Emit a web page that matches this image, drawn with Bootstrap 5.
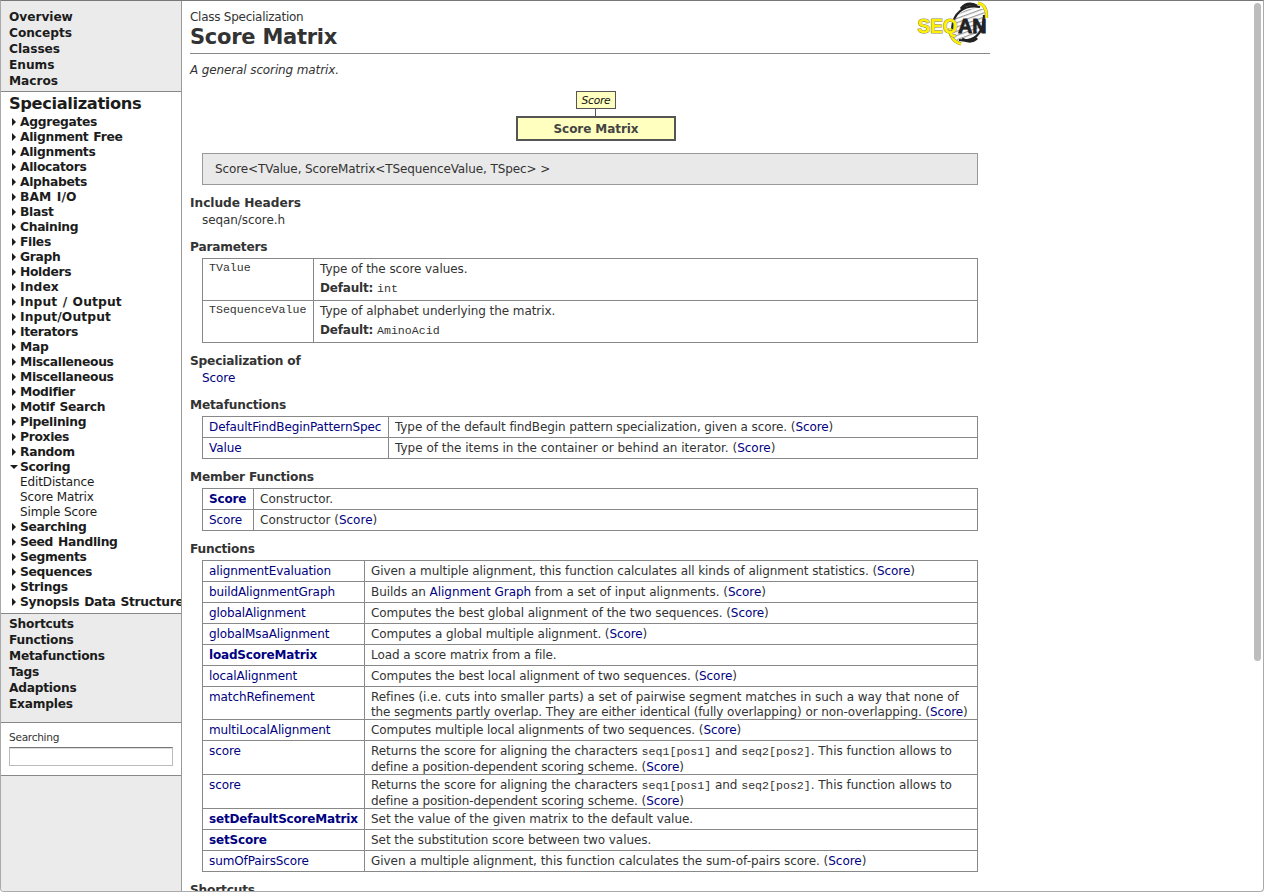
<!DOCTYPE html>
<html lang="en">
<head>
<meta charset="utf-8">
<title>Score Matrix</title>
<link rel="stylesheet" href="https://cdn.jsdelivr.net/npm/bootstrap@5.3.0/dist/css/bootstrap.min.css">
<style>
html,body{height:100%}
body{font-family:"DejaVu Sans",Verdana,sans-serif;font-size:12px;line-height:15px;color:#333;background:#fff;letter-spacing:-.07px}
a{color:#000080;text-decoration:none}
.window{border:1px solid #aaa;border-top-color:#777;border-radius:0 0 4px 4px}
.sidebar{width:181px;border-right:1px solid #999;background:#ebebeb}
.sidebar a{color:#1c1c1c;display:block;font-weight:bold;white-space:nowrap}
.side-links{line-height:16px;font-size:12.2px;padding-left:8px;letter-spacing:-.22px}
.side-top{height:90px;padding-top:8px;letter-spacing:-.05px}
.side-bottom{padding-top:2px;height:108px}
.tree{height:523px;border:solid #888;border-width:1px 0;padding:3px 0 0 8px}
.tree a{padding-left:11px;position:relative;font-size:12.3px;letter-spacing:-.32px;word-spacing:1px}
.tree a.tree-title{font-size:16.3px;line-height:18px;padding-left:0;margin-bottom:2px;letter-spacing:-.38px}
.tree a.leaf{font-weight:normal;font-size:12px;letter-spacing:-.12px;word-spacing:0}
.tree a.wide{letter-spacing:.1px}
.tree a.closed::before{content:"";position:absolute;left:3px;top:3px;border-left:4px solid #1c1c1c;border-top:4px solid transparent;border-bottom:4px solid transparent}
.tree a.opened::before{content:"";position:absolute;left:1px;top:5px;border-top:4px solid #1c1c1c;border-left:4px solid transparent;border-right:4px solid transparent}
.search{height:54px;border:solid #888;border-width:1px 0;padding:7px 8px 0;font-size:10.6px;letter-spacing:-.3px}
.search input{display:block;width:164px;height:19px;margin-top:2px;border:1px solid #bbb;border-top:1px solid #777;border-radius:0;box-shadow:inset 0 1px 0 #ddd;padding:0 3px}
.content-pane{width:800px;margin-left:8px}
.page-head{height:53px;border-bottom:1px solid #888;padding-top:9px}
.page-head h1{font-size:21px;line-height:24px;font-weight:bold;margin:0;letter-spacing:-.25px}
.kind{letter-spacing:-.26px}
.logo{position:absolute;right:0;top:0}
.summary{font-style:italic;margin:9px 0 13px;letter-spacing:-.12px}
.node{background:#ffffc0;border:1px solid #555}
.node-base{width:40px;height:18px;font-size:10.7px;line-height:17px;font-style:italic;letter-spacing:-.25px}
.node-base a{color:#111}
.node-line{width:1px;height:7px;background:#555;margin-right:1px}
.node-self{width:160px;height:25px;border-width:2px;line-height:23px;font-weight:bold;color:#444}
.signature{margin:12px 12px 0;height:32px;border:1px solid #999;background:#e9e9e9;padding:8px 12px;letter-spacing:-.11px}
h2{font-size:12.2px;line-height:15px;font-weight:bold;margin:11px 0 3px;letter-spacing:-.2px}
.item{margin:-1px 12px 12px}
.doc-table{width:776px;margin:0 12px;table-layout:fixed;border-collapse:collapse;border-color:#888;color:#333}
.doc-table td{padding:3px 6px 0;height:21px;border:1px solid #888;vertical-align:top;white-space:nowrap;background:#fff;color:#333}
.doc-table td:first-child{letter-spacing:-.1px}
.doc-table td b{letter-spacing:-.17px}
.doc-table .tall td{height:33px}
.doc-table .coded td{height:34px;line-height:16px;padding-top:2px}
.doc-table .param td{height:42px}
.doc-table .param td:first-child{padding-top:1px}
.two-lines{margin-bottom:-2px}
.fit-loose{letter-spacing:-.04px}
.fit-none{letter-spacing:0}
.fit-stats{letter-spacing:-.075px}
.fit-tight{letter-spacing:-.095px}
.fit-tighter{letter-spacing:-.105px}
code{font-family:"Liberation Mono",monospace;font-size:11.6px;color:#333;line-height:1;letter-spacing:0}
.default{margin-top:4px}
.scroll-thumb{position:absolute;right:2px;top:2px;width:7px;height:658px;border-radius:4px;background:#bdbdbd}
</style>
<script src="https://cdn.jsdelivr.net/npm/bootstrap@5.3.0/dist/js/bootstrap.bundle.min.js"></script>
</head>
<body>
<div class="window d-flex vh-100 overflow-hidden position-relative">
<nav class="sidebar flex-shrink-0 overflow-hidden">
<div class="side-links side-top"><a href="#">Overview</a><a href="#">Concepts</a><a href="#">Classes</a><a href="#">Enums</a><a href="#">Macros</a></div>
<div class="tree bg-white overflow-hidden">
<a class="tree-title" href="#">Specializations</a>
<a class="closed" href="#">Aggregates</a>
<a class="closed" href="#">Alignment Free</a>
<a class="closed" href="#">Alignments</a>
<a class="closed" href="#">Allocators</a>
<a class="closed" href="#">Alphabets</a>
<a class="closed wide" href="#">BAM I/O</a>
<a class="closed" href="#">Blast</a>
<a class="closed" href="#">Chaining</a>
<a class="closed" href="#">Files</a>
<a class="closed" href="#">Graph</a>
<a class="closed" href="#">Holders</a>
<a class="closed wide" href="#">Index</a>
<a class="closed wide" href="#">Input / Output</a>
<a class="closed wide" href="#">Input/Output</a>
<a class="closed" href="#">Iterators</a>
<a class="closed" href="#">Map</a>
<a class="closed" href="#">Miscalleneous</a>
<a class="closed" href="#">Miscellaneous</a>
<a class="closed" href="#">Modifier</a>
<a class="closed" href="#">Motif Search</a>
<a class="closed" href="#">Pipelining</a>
<a class="closed" href="#">Proxies</a>
<a class="closed" href="#">Random</a>
<a class="opened" href="#">Scoring</a>
<a class="leaf" href="#">EditDistance</a>
<a class="leaf" href="#">Score Matrix</a>
<a class="leaf" href="#">Simple Score</a>
<a class="closed" href="#">Searching</a>
<a class="closed" href="#">Seed Handling</a>
<a class="closed" href="#">Segments</a>
<a class="closed" href="#">Sequences</a>
<a class="closed" href="#">Strings</a>
<a class="closed" href="#">Synopsis Data Structure</a>
</div>
<div class="side-links side-bottom"><a href="#">Shortcuts</a><a href="#">Functions</a><a href="#">Metafunctions</a><a href="#">Tags</a><a href="#">Adaptions</a><a href="#">Examples</a></div>
<div class="search bg-white"><label for="q">Searching</label><input id="q" type="text"></div>
</nav>
<main class="content-pane flex-shrink-0">
<header class="page-head position-relative">
<div class="kind">Class Specialization</div>
<h1>Score Matrix</h1>
<svg class="logo" width="76" height="48" viewBox="914 1 76 48">
<defs><pattern id="rungs" width="6" height="4" patternUnits="userSpaceOnUse" patternTransform="rotate(-20)"><rect width="6" height="4" fill="#fff"/><rect width="6" height="1.2" fill="#999"/></pattern></defs>
<path d="M953 33C952 14 964 6 984 9C987 26 982 43 958 41Z" fill="url(#rungs)"/>
<path d="M952 29C953 13 964 4 980 7" fill="none" stroke="#222" stroke-width="2.2"/>
<path d="M961 9C965 4 971 3 977 6" fill="none" stroke="#222" stroke-width="3"/>
<path d="M959 40C972 42 984 36 984 15" fill="none" stroke="#222" stroke-width="2.2"/>
<path d="M962 39C968 42 973 42 977 38" fill="none" stroke="#222" stroke-width="3"/>
<path d="M978 3C984 4 987 9 986.500 18M950 28C950 37 953 41 961 44" fill="none" stroke="#886" stroke-width="3.200"/>
<path d="M978 3C984 4 987 9 986.500 18M950 28C950 37 953 41 961 44" fill="none" stroke="#fff000" stroke-width="2.300"/>
<g font-family="Liberation Sans" font-size="20" font-weight="bold" paint-order="stroke">
<text x="917.5" y="33" textLength="40" lengthAdjust="spacingAndGlyphs" fill="#fff000" stroke="#886" stroke-width="1.1">SEQ</text>
<text x="958" y="33" textLength="28.500" lengthAdjust="spacingAndGlyphs" fill="#222" stroke="#222" stroke-width=".8">AN</text></g>
</svg>
</header>
<p class="summary">A general scoring matrix.</p>
<div class="d-flex flex-column align-items-center text-center" style="width:812px">
<div class="node node-base"><a href="#">Score</a></div><div class="node-line"></div><div class="node node-self">Score Matrix</div>
</div>
<div class="signature">Score&lt;TValue, ScoreMatrix&lt;TSequenceValue, TSpec&gt; &gt;</div>
<h2 class="fit-loose">Include Headers</h2>
<div class="item">seqan/score.h</div>
<h2>Parameters</h2>
<table class="doc-table"><colgroup><col style="width:111px"><col></colgroup>
<tr class="param"><td><code>TValue</code></td><td>Type of the score values.<div class="default"><b>Default:</b> <code>int</code></div></td></tr>
<tr class="param"><td><code>TSequenceValue</code></td><td>Type of alphabet underlying the matrix.<div class="default"><b>Default:</b> <code>AminoAcid</code></div></td></tr>
</table>
<h2>Specialization of</h2>
<div class="item"><a href="#">Score</a></div>
<h2>Metafunctions</h2>
<table class="doc-table"><colgroup><col style="width:186px"><col></colgroup>
<tr><td><a href="#">DefaultFindBeginPatternSpec</a></td><td class="fit-tight">Type of the default findBegin pattern specialization, given a score. (<a href="#">Score</a>)</td></tr>
<tr><td><a href="#">Value</a></td><td class="fit-none">Type of the items in the container or behind an iterator. (<a href="#">Score</a>)</td></tr>
</table>
<h2>Member Functions</h2>
<table class="doc-table"><colgroup><col style="width:51px"><col></colgroup>
<tr><td><a href="#"><b>Score</b></a></td><td class="fit-none">Constructor.</td></tr>
<tr><td><a href="#">Score</a></td><td class="fit-none">Constructor (<a href="#">Score</a>)</td></tr>
</table>
<h2>Functions</h2>
<table class="doc-table"><colgroup><col style="width:162px"><col></colgroup>
<tr><td><a href="#">alignmentEvaluation</a></td><td class="fit-stats">Given a multiple alignment, this function calculates all kinds of alignment statistics. (<a href="#">Score</a>)</td></tr>
<tr><td><a href="#">buildAlignmentGraph</a></td><td class="fit-loose">Builds an <a href="#">Alignment Graph</a> from a set of input alignments. (<a href="#">Score</a>)</td></tr>
<tr><td><a href="#">globalAlignment</a></td><td>Computes the best global alignment of the two sequences. (<a href="#">Score</a>)</td></tr>
<tr><td><a href="#">globalMsaAlignment</a></td><td class="fit-tight">Computes a global multiple alignment. (<a href="#">Score</a>)</td></tr>
<tr><td><a href="#"><b>loadScoreMatrix</b></a></td><td>Load a score matrix from a file.</td></tr>
<tr><td><a href="#">localAlignment</a></td><td>Computes the best local alignment of two sequences. (<a href="#">Score</a>)</td></tr>
<tr class="tall"><td><a href="#">matchRefinement</a></td><td><div class="two-lines"><span class="fit-loose">Refines (i.e. cuts into smaller parts) a set of pairwise segment matches in such a way that none of</span><br><span class="fit-tighter">the segments partly overlap. They are either identical (fully overlapping) or non-overlapping. (<a href="#">Score</a>)</span></div></td></tr>
<tr><td><a href="#">multiLocalAlignment</a></td><td class="fit-tight">Computes multiple local alignments of two sequences. (<a href="#">Score</a>)</td></tr>
<tr class="coded"><td><a href="#">score</a></td><td><div class="two-lines"><span class="fit-loose">Returns the score for aligning the characters <code>seq1[pos1]</code> and <code>seq2[pos2]</code>. This function allows to</span><br><span class="fit-tighter">define a position-dependent scoring scheme. (<a href="#">Score</a>)</span></div></td></tr>
<tr class="coded"><td><a href="#">score</a></td><td><div class="two-lines"><span class="fit-loose">Returns the score for aligning the characters <code>seq1[pos1]</code> and <code>seq2[pos2]</code>. This function allows to</span><br><span class="fit-tighter">define a position-dependent scoring scheme. (<a href="#">Score</a>)</span></div></td></tr>
<tr><td><a href="#"><b>setDefaultScoreMatrix</b></a></td><td class="fit-loose">Set the value of the given matrix to the default value.</td></tr>
<tr><td><a href="#"><b>setScore</b></a></td><td class="fit-loose">Set the substitution score between two values.</td></tr>
<tr><td><a href="#">sumOfPairsScore</a></td><td class="fit-loose">Given a multiple alignment, this function calculates the sum-of-pairs score. (<a href="#">Score</a>)</td></tr>
</table>
<h2>Shortcuts</h2>
</main>
<div class="scroll-thumb"></div>
</div>
</body>
</html>
